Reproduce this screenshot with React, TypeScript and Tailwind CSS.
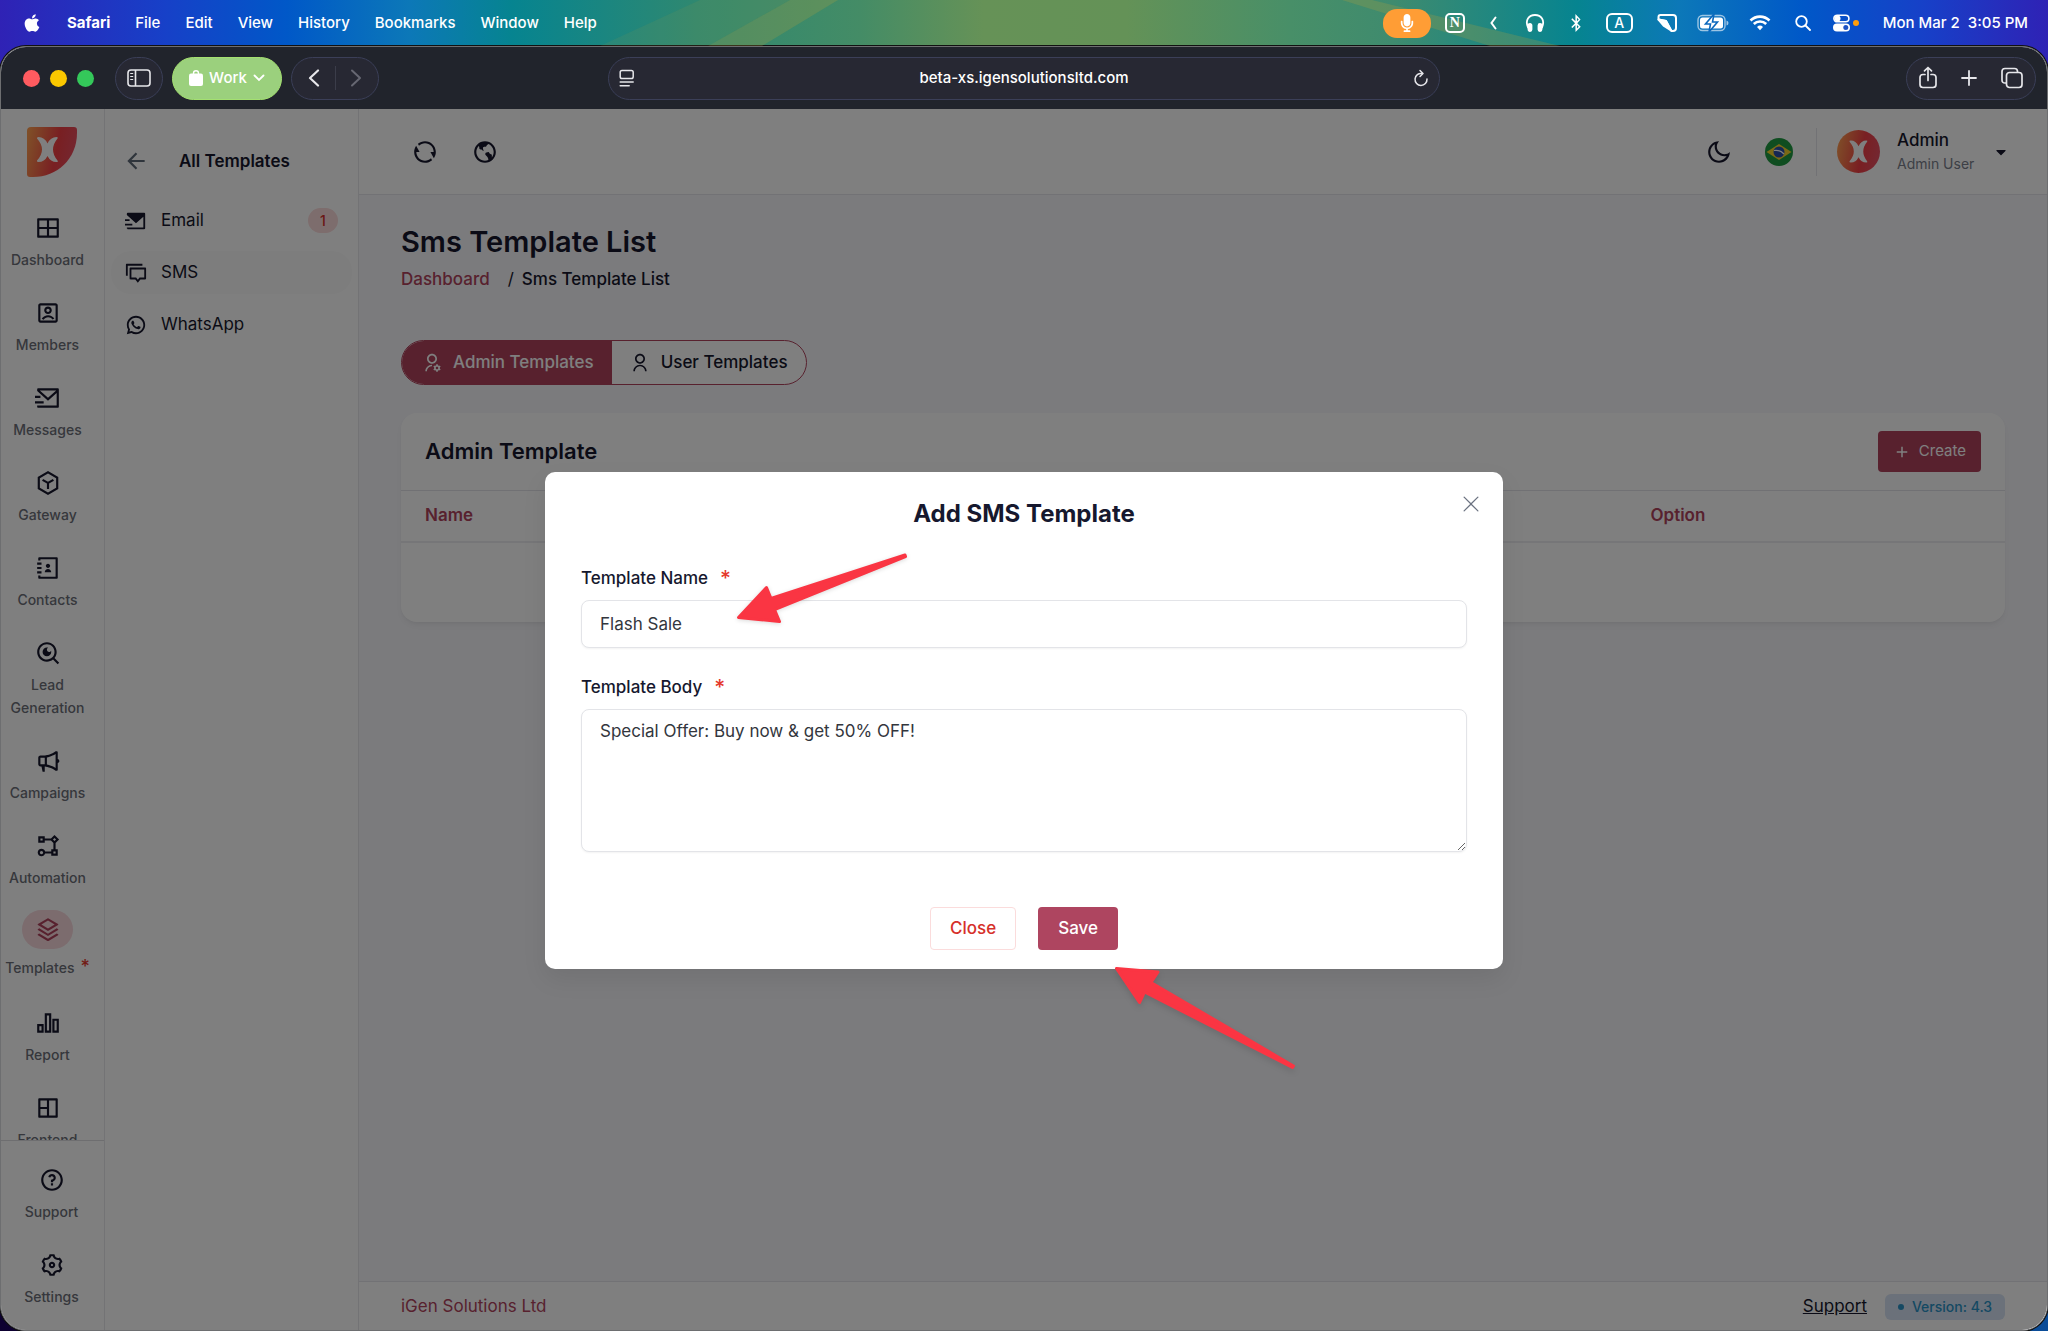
import { useState } from "react";
import type { ComponentType, ReactNode } from "react";
import { BsXLg } from "react-icons/bs";
import { FaApple, FaBluetoothB, FaCaretDown, FaMicrophone } from "react-icons/fa";
import {
  RiAccountBoxLine,
  RiAddLine,
  RiArrowLeftLine,
  RiBarChart2Line,
  RiContactsBook3Line,
  RiDiscussLine,
  RiEarthLine,
  RiFlowChart,
  RiInstanceLine,
  RiLayout4Line,
  RiLayoutGridLine,
  RiMailSendFill,
  RiMailSendLine,
  RiMegaphoneLine,
  RiMoonLine,
  RiQuestionLine,
  RiRefreshLine,
  RiSearchEyeLine,
  RiSettings3Line,
  RiStackLine,
  RiUserLine,
  RiUserSettingsLine,
  RiWhatsappLine,
} from "react-icons/ri";

type IconType = ComponentType<{ className?: string }>;

const menus = ["File", "Edit", "View", "History", "Bookmarks", "Window", "Help"];

const railItems: { label: string; icon: IconType; active?: boolean }[] = [
  { label: "Dashboard", icon: RiLayoutGridLine },
  { label: "Members", icon: RiAccountBoxLine },
  { label: "Messages", icon: RiMailSendLine },
  { label: "Gateway", icon: RiInstanceLine },
  { label: "Contacts", icon: RiContactsBook3Line },
  { label: "Lead Generation", icon: RiSearchEyeLine },
  { label: "Campaigns", icon: RiMegaphoneLine },
  { label: "Automation", icon: RiFlowChart },
  { label: "Templates", icon: RiStackLine, active: true },
  { label: "Report", icon: RiBarChart2Line },
  { label: "Frontend", icon: RiLayout4Line },
];

const templateLinks: {
  label: string;
  icon: IconType;
  count?: number;
  active?: boolean;
}[] = [
  { label: "Email", icon: RiMailSendFill, count: 1 },
  { label: "SMS", icon: RiDiscussLine, active: true },
  { label: "WhatsApp", icon: RiWhatsappLine },
];

const butterfly =
  "M10 11.500 Q9.500 10 11.500 10 Q17.500 10 20.500 16.500 Q23.500 10 29.500 10 Q31.500 10 30.500 11.500 Q26 17 26 22.500 Q26 28 30.500 33.500 Q31.500 35 29.500 35 Q23.500 35 20.500 29 Q17.500 35 11.500 35 Q9.500 35 10 33.500 Q15 28 15 22.500 Q15 17 10 11.500Z";

function Logo() {
  return (
    <svg viewBox="0 0 50 50" className="size-[50px]">
      <defs>
        <linearGradient id="logo" x1="0" y1="0.3" x2="1" y2="0.5">
          <stop offset="0" stopColor="#ff9c50" />
          <stop offset="0.6" stopColor="#f23f45" />
          <stop offset="1" stopColor="#e84f62" />
        </linearGradient>
      </defs>
      <path
        d="M4 0H47Q50 0 50 3V6C50 32 30 50 6 50H3Q0 50 0 47V4Q0 0 4 0Z"
        fill="url(#logo)"
      />
      <path d={butterfly} fill="#fff" />
    </svg>
  );
}

function Avatar() {
  return (
    <svg viewBox="0 0 43 43" className="size-[43px]">
      <circle cx="21.500" cy="21.500" r="21.500" fill="url(#logo)" />
      <path d={butterfly} fill="#fff" transform="translate(3.900 1.700) scale(0.860 0.880)" />
    </svg>
  );
}

function BrazilFlag() {
  return (
    <svg viewBox="0 0 28 28" className="size-7">
      <defs>
        <clipPath id="flag">
          <circle cx="14" cy="14" r="14" />
        </clipPath>
      </defs>
      <g clipPath="url(#flag)">
        <rect width="28" height="28" fill="#1f9a41" />
        <path d="M14 6 26.500 14 14 22 1.500 14Z" fill="#f6d32c" />
        <circle cx="14" cy="14" r="5.500" fill="#2b4fa8" />
        <path d="M9 12.500Q15 11.500 19 16" stroke="#fff" strokeWidth="1.200" fill="none" />
      </g>
    </svg>
  );
}

function MenuBar() {
  return (
    <header className="relative flex h-[46px] shrink-0 items-center justify-between pr-5 pl-[22px] text-[15px] font-medium text-white">
      <svg
        viewBox="0 0 2048 46"
        preserveAspectRatio="none"
        className="absolute inset-0 h-full w-full"
        fill="#b5a03c"
        fillOpacity="0.25"
      >
        <path d="M790 0H838L762 46H708Z" />
        <path d="M700 0H790L708 46H600Z" fillOpacity="0.1" />
        <path d="M1342 0H1372L1560 46H1490Z" />
      </svg>
      <nav className="relative flex items-center gap-[25px]">
        <FaApple className="size-5" />
        <span className="font-bold">Safari</span>
        {menus.map((menu) => (
          <span key={menu}>{menu}</span>
        ))}
      </nav>
      <div className="relative flex items-center">
        <span className="flex h-[29px] w-12 items-center justify-center rounded-[14px] bg-[#ff9d35]">
          <FaMicrophone className="size-[18px]" />
        </span>
        <span className="ml-3.5 flex size-5 items-center justify-center rounded-[5px] border-2 border-white font-['Liberation_Serif'] text-sm font-bold">
          N
        </span>
        <svg viewBox="0 0 8 16" className="ml-6 h-4 w-2" fill="none" stroke="currentColor" strokeWidth="2" strokeLinecap="round">
          <path d="M6.500 2.500 2.500 8l4 5.500" />
        </svg>
        <svg viewBox="0 0 20 20" className="ml-7 size-5" fill="none" stroke="currentColor" strokeWidth="1.800">
          <path d="M3.200 15C-.500 7 4 2 10 2s10.500 5 6.800 13" />
          <rect x="3.500" y="11" width="3" height="7" rx="1.400" fill="currentColor" />
          <rect x="13.500" y="11" width="3" height="7" rx="1.400" fill="currentColor" />
        </svg>
        <FaBluetoothB className="ml-[22px] size-[18px]" />
        <span className="ml-[21px] flex h-5 w-[27px] items-center justify-center rounded-md border-2 border-white text-sm">
          A
        </span>
        <svg viewBox="0 0 20 20" className="ml-6 size-5" fill="none" stroke="currentColor" strokeWidth="2" strokeLinejoin="round">
          <path d="M3.500 2H16q3 0 3 3v10q0 3-3 3h-1.500L9 8 1.500 6.500V4q0-2 2-2Z" />
          <path d="M1.500 6.500 9 8l5 9.500-7-4.500Z" fill="currentColor" />
        </svg>
        <svg viewBox="0 0 32 18" className="ml-5 h-[18px] w-8" fill="none">
          <rect x="1" y="1.500" width="27" height="15" rx="4.500" stroke="#fff" strokeOpacity="0.600" strokeWidth="1.400" />
          <rect x="3" y="3.500" width="23" height="11" rx="2.500" fill="#fff" />
          <path d="M29.500 6.500v5q2-.500 2-2.500t-2-2.500Z" fill="#fff" fillOpacity="0.600" />
          <path d="M17 0 8.500 10h5L12 18l8.500-10h-5Z" fill="#fff" stroke="#0b68bd" strokeWidth="1.600" />
        </svg>
        <svg viewBox="0 0 22 16" className="ml-5 h-4 w-[22px]" fill="none" stroke="currentColor" strokeWidth="2.600">
          <path d="M1.500 5.500a13.500 13.500 0 0 1 19 0M4.800 9a8.800 8.800 0 0 1 12.400 0" />
          <path d="M8 12a4.300 4.300 0 0 1 6 0l-3 3.200Z" fill="currentColor" stroke="none" />
        </svg>
        <svg viewBox="0 0 16 16" className="ml-6 size-4" fill="none" stroke="currentColor" strokeWidth="1.800" strokeLinecap="round">
          <circle cx="6.500" cy="6.500" r="5.300" />
          <path d="m10.500 10.500 4.500 4.500" />
        </svg>
        <svg viewBox="0 0 26 18" className="ml-[22px] h-[18px] w-[26px]" fill="none">
          <rect x="0.900" y="1.200" width="15" height="6.600" rx="3.300" stroke="#fff" strokeWidth="1.600" />
          <circle cx="4.500" cy="4.500" r="3" fill="#fff" />
          <rect y="9.600" width="17" height="8" rx="4" fill="#fff" />
          <circle cx="12.800" cy="13.600" r="2.500" fill="#1d52c4" />
          <circle cx="23" cy="9" r="3" fill="#ff9d0a" />
        </svg>
        <time className="ml-6 whitespace-pre">Mon Mar 2{"  "}3:05 PM</time>
      </div>
    </header>
  );
}

const glass =
  "flex h-[43px] items-center rounded-full border border-[#3b3f58] bg-[#272833] text-[#e6e6ea]";

function Toolbar() {
  return (
    <div className="grid h-[62px] shrink-0 grid-cols-[1fr_832px_1fr] items-center bg-[#21242c] px-[11px]">
      <div className="flex items-center pl-[11px]">
        <div className="flex gap-2.5">
          <span className="size-[17px] rounded-full bg-[#ff5b60]" />
          <span className="size-[17px] rounded-full bg-[#fbc800]" />
          <span className="size-[17px] rounded-full bg-[#34c85a]" />
        </div>
        <button type="button" aria-label="Toggle sidebar" className={`${glass} ml-[21px] w-12 justify-center`}>
          <svg viewBox="0 0 24 18" className="h-[18px] w-6" fill="none" stroke="currentColor" strokeWidth="1.600">
            <rect x="1" y="1" width="22" height="16" rx="3" />
            <path d="M8.500 1v16" />
            <path d="M3.200 4.500h3M3.200 7.500h3M3.200 10.500h3" strokeWidth="1.200" />
          </svg>
        </button>
        <button
          type="button"
          className="ml-[9px] flex h-[43px] w-[110px] items-center justify-center gap-1.5 rounded-full border border-[#a4e070] bg-[#9bd07d] text-[15px] font-medium text-white"
        >
          <svg viewBox="0 0 14 16" className="h-4 w-3.5" fill="none">
            <path d="M4.500 4V3.200a2.500 2.500 0 0 1 5 0V4" stroke="#fff" strokeWidth="1.400" />
            <rect y="3.500" width="14" height="12.500" rx="2" fill="#fff" />
          </svg>
          Work
          <svg viewBox="0 0 12 8" className="h-2 w-3" fill="none" stroke="#fff" strokeWidth="1.800" strokeLinecap="round">
            <path d="m1.500 1.500 4.500 4.500 4.500-4.500" />
          </svg>
        </button>
        <div className={`${glass} ml-[9px] w-[88px] justify-between px-4`}>
          <button type="button" aria-label="Back">
            <svg viewBox="0 0 12 18" className="h-[18px] w-3" fill="none" stroke="currentColor" strokeWidth="2.200" strokeLinecap="round" strokeLinejoin="round">
              <path d="M10 1.500 2 9l8 7.500" />
            </svg>
          </button>
          <span className="h-6 w-px bg-[#3b3d4a]" />
          <button type="button" aria-label="Forward" className="text-[#666772]">
            <svg viewBox="0 0 12 18" className="h-[18px] w-3" fill="none" stroke="currentColor" strokeWidth="2" strokeLinecap="round" strokeLinejoin="round">
              <path d="m2 1.500 8 7.500-8 7.500" />
            </svg>
          </button>
        </div>
      </div>
      <div className={`${glass} justify-between px-2.5`}>
        <svg viewBox="0 0 16 18" className="h-[18px] w-4" fill="none" stroke="currentColor" strokeWidth="1.500" strokeLinecap="round">
          <rect x="1.200" y="1.500" width="13" height="8" rx="1.800" />
          <path d="M1.200 13h13M1.200 16.800h9" />
        </svg>
        <span className="text-[15px] font-medium text-white">beta-xs.igensolutionsltd.com</span>
        <svg viewBox="0 0 16 18" className="h-[18px] w-4" fill="none" stroke="currentColor" strokeWidth="1.500" strokeLinecap="round" strokeLinejoin="round">
          <path d="M9 4.500A6 6 0 1 0 14 10" />
          <path d="M7 1.500 10 4.500l-3 3" />
        </svg>
      </div>
      <div className={`${glass} w-[130px] justify-between justify-self-end px-3`}>
        <svg viewBox="0 0 18 24" className="h-6 w-[18px]" fill="none" stroke="currentColor" strokeWidth="1.700" strokeLinecap="round" strokeLinejoin="round">
          <path d="M6 8.500H4Q1 8.500 1 11.500v7Q1 21.500 4 21.500h10q3 0 3-3v-7q0-3-3-3h-2" />
          <path d="M9 14.500V1.500M5.500 4.800 9 1.500l3.500 3.300" />
        </svg>
        <svg viewBox="0 0 16 16" className="size-4" fill="none" stroke="currentColor" strokeWidth="1.800" strokeLinecap="round">
          <path d="M8 1v14M1 8h14" />
        </svg>
        <svg viewBox="0 0 22 22" className="size-[22px]" fill="none" stroke="currentColor" strokeWidth="1.700" strokeLinejoin="round">
          <rect x="5.500" y="5.500" width="15.500" height="15" rx="3" />
          <path d="M5 16H4q-3 0-3-3V4.500q0-3 3-3h9.500q3 0 3 3V5" />
        </svg>
      </div>
    </div>
  );
}

function RailLink({ label, icon: Icon, active }: { label: string; icon: IconType; active?: boolean }) {
  return (
    <a href="#" className={`flex flex-col items-center gap-[7px] text-center ${active ? "" : "pt-2"}`}>
      {active ? (
        <span className="flex h-[39px] w-[51px] items-center justify-center rounded-full bg-[#f8d8dd] text-[#b0435d]">
          <Icon className="size-[26px]" />
        </span>
      ) : (
        <Icon className="size-[26px] text-[#16172c]" />
      )}
      <span className={`text-sm leading-[23px] font-medium text-[#6c6f78] ${active ? "pb-0.5" : ""}`}>
        {label}
        {active && <span className="ml-1.5 text-lg leading-none text-[#e5392d]">*</span>}
      </span>
    </a>
  );
}

function Rail() {
  return (
    <aside className="flex w-[104px] shrink-0 flex-col border-r border-[#e6e6ea]">
      <a href="#" className="mt-[18px] ml-[26px]" aria-label="Home">
        <Logo />
      </a>
      <nav className="mt-[30px] flex min-h-0 flex-1 flex-col gap-[21px] overflow-hidden pr-2.5">
        {railItems.map((item) => (
          <RailLink key={item.label} {...item} />
        ))}
      </nav>
      <div className="flex flex-col gap-[21px] border-t border-[#dcdce0] pt-[18px] pr-0.5 pb-[22px]">
        <RailLink label="Support" icon={RiQuestionLine} />
        <RailLink label="Settings" icon={RiSettings3Line} />
      </div>
    </aside>
  );
}

function TemplateMenu() {
  return (
    <aside className="w-[254px] shrink-0 border-r border-[#e6e6ea] px-1.5 text-[#16172c]">
      <div className="mt-[39px] flex items-center gap-[30px] pl-3">
        <button type="button" aria-label="Back" className="text-[#5f6b78]">
          <RiArrowLeftLine className="size-[26px]" />
        </button>
        <h2 className="text-[17px] leading-[26px] font-semibold">All Templates</h2>
      </div>
      <ul className="mt-[25px] flex flex-col gap-[9px]">
        {templateLinks.map(({ label, icon: Icon, count, active }) => (
          <li key={label}>
            <a
              href="#"
              className={`flex h-[43px] items-center rounded-[20px] px-3.5 text-[17px] ${active ? "bg-[#fbfbfb]" : ""}`}
            >
              <Icon className="size-[22px]" />
              <span className="ml-3.5">{label}</span>
              {count && (
                <span className="ml-auto flex h-[25px] w-[30px] items-center justify-center rounded-full bg-[#fbdada] text-sm font-medium text-[#d6302a]">
                  {count}
                </span>
              )}
            </a>
          </li>
        ))}
      </ul>
    </aside>
  );
}

function TopBar() {
  return (
    <header className="flex h-[86px] shrink-0 items-center justify-between border-b border-[#e4e4ea] bg-white pr-[38px] pl-[53px] text-[#16172c]">
      <div className="flex gap-[34px]">
        <button type="button" aria-label="Refresh">
          <RiRefreshLine className="size-[26px]" />
        </button>
        <button type="button" aria-label="Visit site">
          <RiEarthLine className="size-[26px]" />
        </button>
      </div>
      <div className="flex items-center">
        <button type="button" aria-label="Dark mode">
          <RiMoonLine className="size-[26px]" />
        </button>
        <button type="button" aria-label="Language" className="ml-[33px]">
          <BrazilFlag />
        </button>
        <span className="mr-5 ml-[23px] h-12 w-px bg-[#e4e4ea]" />
        <button type="button" className="flex items-center text-left">
          <Avatar />
          <span className="ml-[17px] w-[82px]">
            <span className="block text-[17px] leading-6 font-medium">Admin</span>
            <span className="block text-sm leading-6 text-[#7a7f8c]">Admin User</span>
          </span>
          <FaCaretDown className="ml-3.5 size-4" />
        </button>
      </div>
    </header>
  );
}

function Content() {
  return (
    <main className="flex-1 px-[42px] pt-7 text-[#16172c]">
      <h1 className="text-[29px] leading-[38px] font-semibold">Sms Template List</h1>
      <nav className="mt-1.5 flex text-[17px] leading-6 font-medium">
        <a href="#" className="text-[#b0435d]">
          Dashboard
        </a>
        <span className="mr-2 ml-[18px] font-normal">/</span>
        <span>Sms Template List</span>
      </nav>

      <div className="mt-[49px] flex w-fit overflow-hidden rounded-full border border-[#b0435d] bg-white text-[17px] font-medium">
        <button type="button" className="flex h-[43px] items-center gap-[11px] bg-[#b0435d] pr-[18px] pl-5 text-white">
          <RiUserSettingsLine className="size-5" />
          Admin Templates
        </button>
        <button type="button" className="flex h-[43px] items-center gap-[11px] px-[18px]">
          <RiUserLine className="size-5" />
          User Templates
        </button>
      </div>

      <section className="mt-7 h-[209px] overflow-hidden rounded-2xl bg-white shadow-md shadow-black/5">
        <div className="flex h-[77px] items-center justify-between px-6">
          <h2 className="text-[22px] font-semibold">Admin Template</h2>
          <button
            type="button"
            className="flex h-[41px] items-center gap-2 rounded bg-[#b0435d] px-[15px] text-[15px] text-white"
          >
            <RiAddLine className="size-[18px]" />
            Create
          </button>
        </div>
        <table className="w-full table-fixed border-t border-[#e2e2e8] text-left text-[17px] text-[#b0435d]">
          <thead>
            <tr className="h-[51px] border-b-2 border-[#ececf0]">
              <th className="w-[76.4%] px-6 font-semibold">Name</th>
              <th className="px-6 font-semibold">Option</th>
            </tr>
          </thead>
        </table>
      </section>
    </main>
  );
}

function Footer() {
  return (
    <footer className="flex h-[49px] shrink-0 items-center border-t border-[#e4e4ea] bg-white px-[42px] pt-0.5 text-[17px]">
      <a href="#" className="text-[#b0435d]">
        iGen Solutions Ltd
      </a>
      <a href="#" className="ml-auto text-[#16172c] underline">
        Support
      </a>
      <span className="ml-[18px] flex h-[26px] w-[120px] items-center justify-center gap-2 rounded-md bg-[#d6e2f4] text-sm font-medium text-[#2a92c6]">
        <span className="size-1.5 rounded-full bg-[#2a92c6]" />
        Version: 4.3
      </span>
    </footer>
  );
}

function Field({ id, label, children }: { id: string; label: string; children: ReactNode }) {
  return (
    <div>
      <label htmlFor={id} className="mb-[9px] flex h-6 items-center gap-3 text-[17px] font-medium">
        {label}
        <span className="text-[21px] text-[#e5392d]">*</span>
      </label>
      {children}
    </div>
  );
}

const control =
  "block w-full rounded-lg border border-[#e3e4e8] bg-white px-[18px] text-[17px] text-[#33363d] shadow-xs outline-none";

function TemplateModal() {
  const [name, setName] = useState("Flash Sale");
  const [body, setBody] = useState("Special Offer: Buy now & get 50% OFF!");

  return (
    <div className="absolute inset-0 flex items-center justify-center bg-black/50 pt-0.5">
      <div
        role="dialog"
        aria-label="Add SMS Template"
        className="relative w-[958px] rounded-[10px] bg-white text-[#16182e] shadow-[0_10px_24px_rgba(0,0,0,0.08)]"
      >
        <h2 className="pt-[26px] text-center text-[24px] leading-8 font-bold">Add SMS Template</h2>
        <button type="button" aria-label="Close dialog" className="absolute top-[22px] right-[22px] text-[#6b7280]">
          <BsXLg className="size-5" />
        </button>
        <form className="px-9 pt-[37px] pb-[19px]">
          <Field id="template-name" label="Template Name">
            <input
              id="template-name"
              value={name}
              onChange={(e) => setName(e.target.value)}
              className={`${control} h-12`}
            />
          </Field>
          <div className="mt-7">
            <Field id="template-body" label="Template Body">
              <textarea
                id="template-body"
                value={body}
                onChange={(e) => setBody(e.target.value)}
                className={`${control} h-[143px] resize py-2 leading-[26px]`}
              />
            </Field>
          </div>
          <div className="mt-[55px] flex justify-center gap-[22px] text-[17px] font-medium">
            <button type="button" className="h-[43px] rounded border border-[#fbdcdc] px-[19px] text-[#d6302a]">
              Close
            </button>
            <button type="button" className="h-[43px] rounded bg-[#ae4560] px-5 text-white">
              Save
            </button>
          </div>
        </form>

        {/* pointers to the name field and the save button */}
        <svg
          viewBox="0 0 172 72"
          className="pointer-events-none absolute top-20 left-[191px] h-[72px] w-[172px] drop-shadow-sm"
          fill="#fa3543"
          stroke="#fa3543"
          strokeWidth="3"
          strokeLinejoin="round"
        >
          <path d="M2.500 65.500 30.500 35.500 35 46.500 169 3 169.500 4.500 38.500 57.500 43.500 69.500Z" />
        </svg>
        <svg
          viewBox="0 0 182 104"
          className="pointer-events-none absolute top-[494px] left-[569px] h-[104px] w-[182px] drop-shadow-md"
          fill="#fa3543"
          stroke="#fa3543"
          strokeWidth="3"
          strokeLinejoin="round"
        >
          <path d="M2.500 2.500 44 6 37 16.500 179.500 100 178.500 101.500 30.500 26 25.500 36.500Z" />
        </svg>
      </div>
    </div>
  );
}

export default function App() {
  return (
    <div className="flex h-screen flex-col overflow-hidden bg-[linear-gradient(to_right,#2f22b5,#1740c8_8%,#0058c8_14%,#0c78b8_20%,#068490_25%,#2f8870_34%,#448c66_42%,#669257_48%,#649257_55%,#488f68_63%,#3f8b6e_68%,#068490_77%,#0c78b8_82%,#0058c8_88%,#1740c8_94%,#2f22b5),linear-gradient(to_right,#0d0030,#0a4c98)] bg-[length:100%_100px,100%_100%] bg-no-repeat font-['Inter',sans-serif]">
      <MenuBar />
      <div className="flex min-h-0 flex-1 flex-col overflow-hidden rounded-[26px] border border-[#6d6e70] bg-white shadow-[0_0_0_1px_#111]">
        <Toolbar />
        <div className="relative flex min-h-0 flex-1">
          <Rail />
          <TemplateMenu />
          <div className="flex min-w-0 flex-1 flex-col bg-[#f6f6fa]">
            <TopBar />
            <Content />
            <Footer />
          </div>
          <TemplateModal />
        </div>
      </div>
    </div>
  );
}
